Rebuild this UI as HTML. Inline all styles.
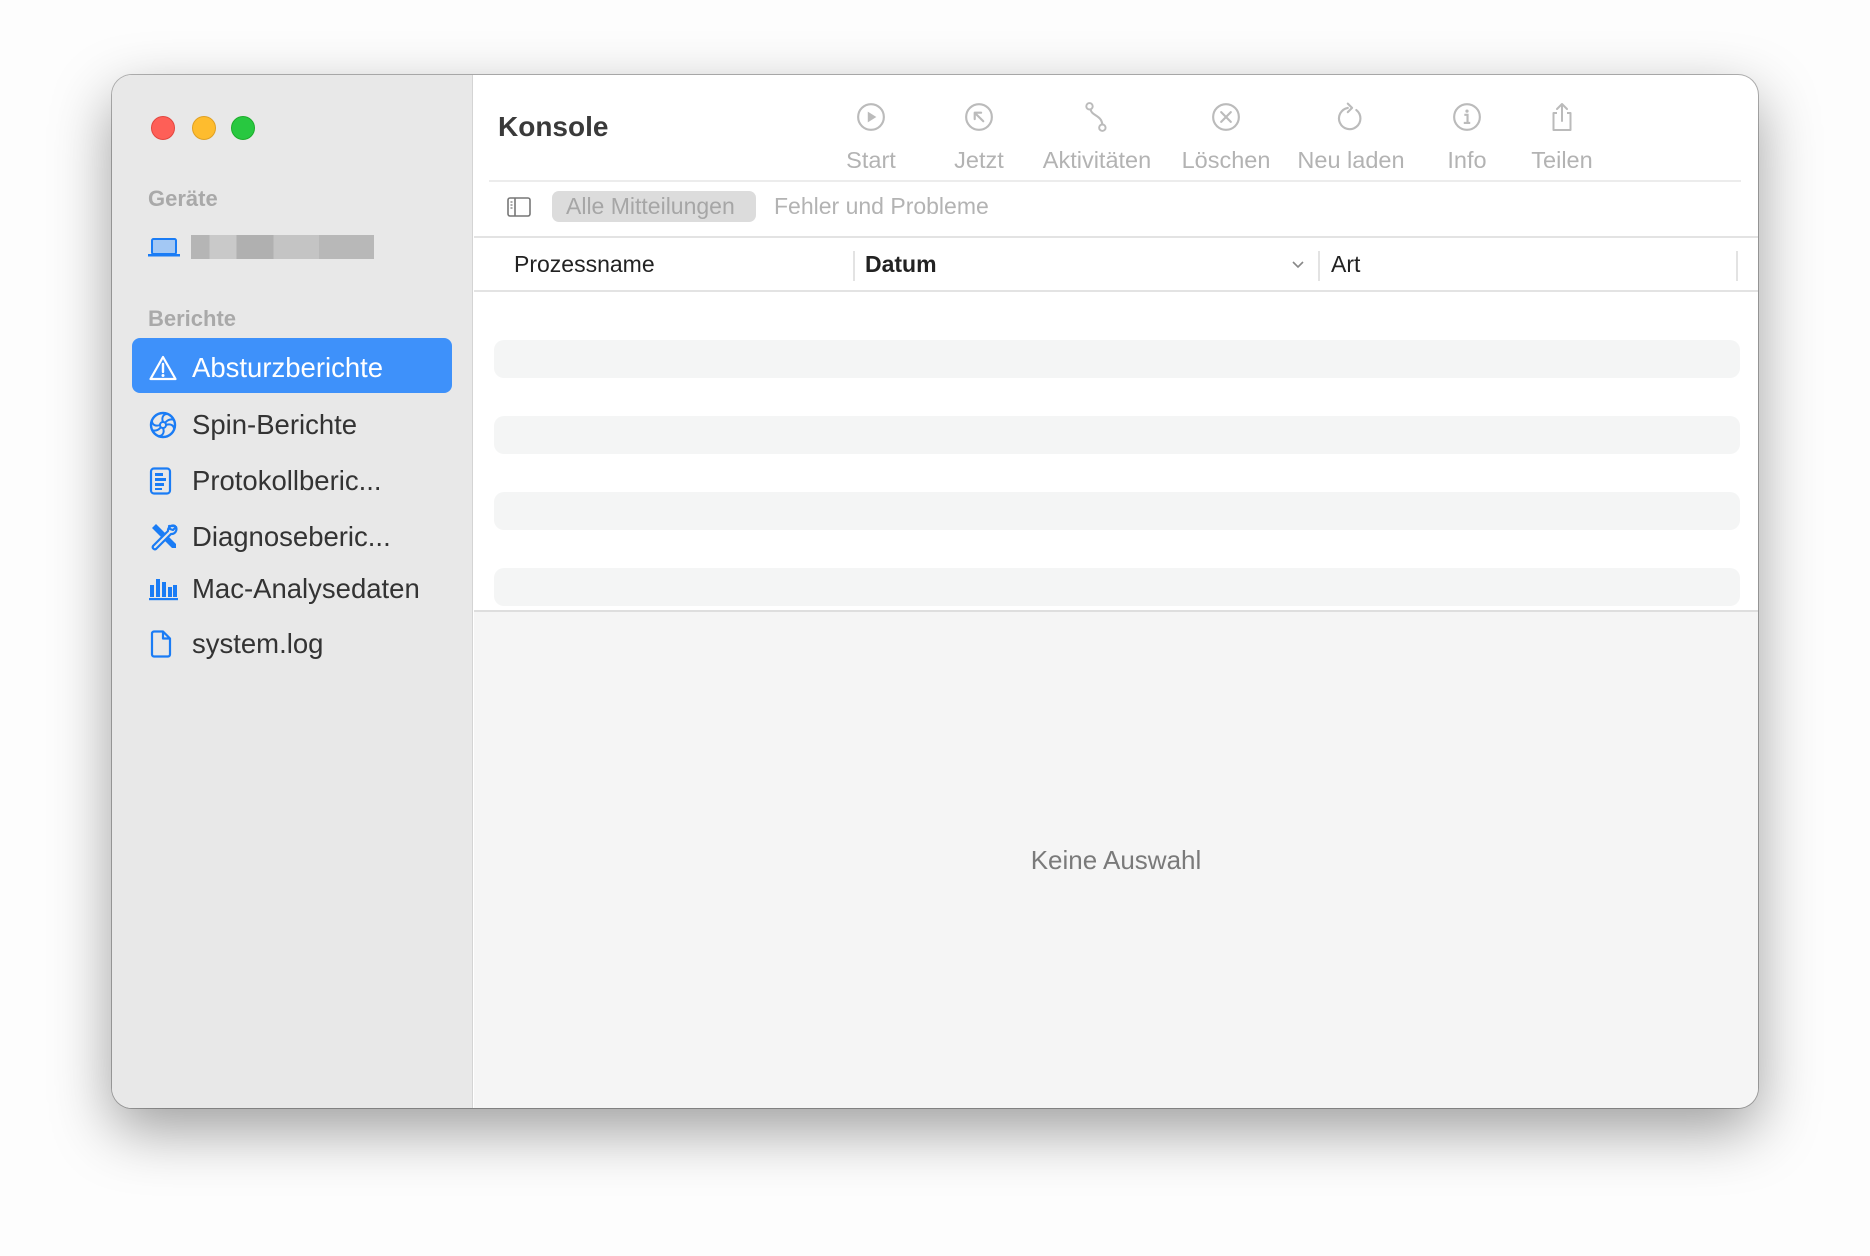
<!DOCTYPE html>
<html><head><meta charset="utf-8"><style>
*{margin:0;padding:0;box-sizing:border-box}
body{width:1870px;height:1256px;background:#fdfdfd;font-family:"Liberation Sans",sans-serif;position:relative;overflow:hidden}
.win{position:absolute;left:112px;top:75px;width:1646px;height:1033px;border-radius:20px;background:#fff;box-shadow:0 0 0 1px rgba(0,0,0,.28),0 22px 60px rgba(0,0,0,.38);overflow:hidden}
.side{position:absolute;left:0;top:0;width:361px;height:100%;background:#e8e8e8;border-right:1px solid #d4d4d4}
.dot{position:absolute;top:41px;width:24px;height:24px;border-radius:50%}
.abs{position:absolute;white-space:nowrap}
.hdr{font-size:22px;font-weight:bold;color:#a9a9a9}
.item{position:absolute;left:0;width:361px;height:56px;font-size:27.5px;color:#333}
.item .t{position:absolute;left:80px;top:50%;transform:translateY(-50%)}
.item svg{position:absolute;left:37px;top:50%;transform:translateY(-50%)}
.main{position:absolute;left:362px;top:0;right:0;height:100%}
.tb{position:absolute;top:0;width:140px;margin-left:-70px;text-align:center}
.tb svg{display:block;margin:27px auto 0}
.tb .l{font-size:23.5px;color:#b3b3b3;margin-top:15px}
.row{position:absolute;left:20px;right:18px;height:38px;background:#f4f5f5;border-radius:10px}
</style></head><body>
<div class="win">
 <div class="side">
  <div class="dot" style="left:39px;background:#fe5f57;border:1px solid #e2463f"></div>
  <div class="dot" style="left:80px;background:#febc2e;border:1px solid #dfa023"></div>
  <div class="dot" style="left:119px;background:#28c840;border:1px solid #1dad2b"></div>
  <div class="abs hdr" style="left:36px;top:111px">Geräte</div>
  <svg class="abs" style="left:36px;top:162px" width="32" height="20" viewBox="0 0 32 20"><rect x="4" y="2" width="24" height="15" rx="1.5" fill="#a3c8f4" stroke="#1a7cf5" stroke-width="2"/><rect x="0" y="17" width="32" height="2.5" fill="#1a7cf5"/></svg>
  <div class="abs" style="left:79px;top:160px;width:183px;height:24px;background:linear-gradient(90deg,#b5b5b5 0 10%,#c9c9c9 10% 25%,#b0b0b0 25% 45%,#c4c4c4 45% 70%,#b8b8b8 70% 100%)"></div>
  <div class="abs hdr" style="left:36px;top:231px">Berichte</div>
  <div class="abs" style="left:20px;top:263px;width:320px;height:55px;background:#3e91fa;border-radius:8px"></div>
  <div class="item" style="top:265px;color:#fff"><svg width="28" height="26" viewBox="0 0 28 26"><path d="M14 2 L26.5 24 H1.5 Z" fill="none" stroke="#fff" stroke-width="2.2" stroke-linejoin="round"/><path d="M14 9v8" stroke="#fff" stroke-width="2.4" stroke-linecap="round"/><circle cx="14" cy="20.5" r="1.5" fill="#fff"/></svg><span class="t" style="color:#fff">Absturzberichte</span></div>
  <div class="item" style="top:322px"><svg width="28" height="28" viewBox="0 0 28 28"><circle cx="14" cy="14" r="12" fill="none" stroke="#1a7cf5" stroke-width="2.4"/><circle cx="14" cy="14" r="3" fill="none" stroke="#1a7cf5" stroke-width="2"/><path d="M14 11 C12 6 15 3 18 3 M17 14 C22 12 25 15 25 18 M14 17 C16 22 13 25 10 25 M11 14 C6 16 3 13 3 10 M16 12 C19 8 23 8 24 9 M12 16 C9 20 5 20 4 19" fill="none" stroke="#1a7cf5" stroke-width="2"/></svg><span class="t">Spin-Berichte</span></div>
  <div class="item" style="top:378px"><svg width="24" height="28" viewBox="0 0 24 28"><rect x="2" y="1.5" width="19" height="25" rx="3" fill="none" stroke="#1a7cf5" stroke-width="2.2"/><rect x="6" y="6" width="8" height="3" fill="#1a7cf5"/><rect x="6" y="11" width="11" height="3" fill="#1a7cf5"/><rect x="6" y="16" width="9" height="3" fill="#1a7cf5"/><rect x="6" y="21" width="7" height="2" fill="#1a7cf5"/></svg><span class="t">Protokollberic...</span></div>
  <div class="item" style="top:434px"><svg width="30" height="30" viewBox="0 0 30 30"><path d="M3 6 L7 2 L27 22 L27 26 L23 26 Z" fill="#1a7cf5"/><path d="M26 4 a5 5 0 0 0 -7 5 L4 24 a2.2 2.2 0 0 0 3 3 L22 12 a5 5 0 0 0 5 -7 l-3 3 -3 -1 -1 -3 z" fill="#e8e8e8" stroke="#1a7cf5" stroke-width="2.2" stroke-linejoin="round"/></svg><span class="t">Diagnoseberic...</span></div>
  <div class="item" style="top:486px"><svg width="30" height="24" viewBox="0 0 30 24"><rect x="1" y="8" width="4" height="12" fill="#1a7cf5"/><rect x="7" y="2" width="4" height="18" fill="#1a7cf5"/><rect x="13" y="5" width="4" height="15" fill="#1a7cf5"/><rect x="19" y="10" width="4" height="10" fill="#1a7cf5"/><rect x="24" y="8" width="4" height="12" fill="#1a7cf5"/><rect x="0" y="21" width="29" height="2.2" fill="#1a7cf5"/></svg><span class="t">Mac-Analysedaten</span></div>
  <div class="item" style="top:541px"><svg width="24" height="28" viewBox="0 0 24 28"><path d="M3 3.5 a2 2 0 0 1 2-2 H14 L21 8.5 V24.5 a2 2 0 0 1 -2 2 H5 a2 2 0 0 1 -2-2 Z M14 1.5 V8.5 H21" fill="none" stroke="#1a7cf5" stroke-width="2.2" stroke-linejoin="round"/></svg><span class="t">system.log</span></div>
 </div>
 <div class="main">
  <div class="abs" style="left:24px;top:36px;font-size:28px;font-weight:bold;color:#3a3a3a">Konsole</div>
  <div class="tb" style="left:397px"><svg width="30" height="30" viewBox="0 0 28 28"><circle cx="14" cy="14" r="12" fill="none" stroke="#bbb" stroke-width="2"/><path d="M11 9 L19 14 L11 19Z" fill="#bbb"/></svg><div class="l">Start</div></div>
  <div class="tb" style="left:505px"><svg width="30" height="30" viewBox="0 0 28 28"><circle cx="14" cy="14" r="12" fill="none" stroke="#bbb" stroke-width="2"/><path d="M18 18 L10 10 M10 10 V16 M10 10 H16" fill="none" stroke="#bbb" stroke-width="2" stroke-linecap="round"/></svg><div class="l">Jetzt</div></div>
  <div class="tb" style="left:623px"><svg width="30" height="30" viewBox="0 0 28 28"><circle cx="7" cy="4" r="3" fill="none" stroke="#bbb" stroke-width="1.8"/><circle cx="19" cy="24" r="3" fill="none" stroke="#bbb" stroke-width="1.8"/><path d="M8 7 C9 13 18 12 19 21" fill="none" stroke="#bbb" stroke-width="2"/></svg><div class="l">Aktivitäten</div></div>
  <div class="tb" style="left:752px"><svg width="30" height="30" viewBox="0 0 28 28"><circle cx="14" cy="14" r="12" fill="none" stroke="#bbb" stroke-width="2"/><path d="M9.5 9.5 L18.5 18.5 M18.5 9.5 L9.5 18.5" stroke="#bbb" stroke-width="2" stroke-linecap="round"/></svg><div class="l">Löschen</div></div>
  <div class="tb" style="left:877px"><svg width="30" height="30" viewBox="0 0 28 28"><path d="M19 7.5 A10 10 0 1 1 11 5.5" fill="none" stroke="#bbb" stroke-width="2" stroke-linecap="round"/><path d="M11 1.5 L15 5.5 L11 9.5" fill="none" stroke="#bbb" stroke-width="2" stroke-linecap="round" stroke-linejoin="round"/></svg><div class="l">Neu laden</div></div>
  <div class="tb" style="left:993px"><svg width="30" height="30" viewBox="0 0 28 28"><circle cx="14" cy="14" r="12" fill="none" stroke="#bbb" stroke-width="2"/><circle cx="14" cy="8.5" r="1.5" fill="#bbb"/><path d="M11.5 12 H14.5 V19 M11 19.5 H17" fill="none" stroke="#bbb" stroke-width="2"/></svg><div class="l">Info</div></div>
  <div class="tb" style="left:1088px"><svg width="30" height="30" viewBox="0 0 28 30"><path d="M9 11 H5.5 V28 H22.5 V11 H19" fill="none" stroke="#bbb" stroke-width="2" stroke-linejoin="round"/><path d="M14 19 V2 M9 7 L14 2 L19 7" fill="none" stroke="#bbb" stroke-width="2" stroke-linecap="round" stroke-linejoin="round"/></svg><div class="l">Teilen</div></div>
  <div class="abs" style="left:15px;right:17px;top:105px;height:2px;background:#ececec"></div>
  <svg class="abs" style="left:33px;top:122px" width="24" height="20" viewBox="0 0 24 20"><rect x="1" y="1" width="22" height="18" rx="2" fill="none" stroke="#777" stroke-width="1.6"/><path d="M8 1 V19" stroke="#777" stroke-width="1.6"/><path d="M3.5 5h2M3.5 8h2M3.5 11h2" stroke="#777" stroke-width="1.2"/></svg>
  <div class="abs" style="left:78px;top:116px;width:204px;height:31px;border-radius:7px;background:#dcdcdc"></div>
  <div class="abs" style="left:92px;top:118px;font-size:23px;color:#a6a6a6">Alle Mitteilungen</div>
  <div class="abs" style="left:300px;top:118px;font-size:23px;color:#b3b3b3">Fehler und Probleme</div>
  <div class="abs" style="left:0;right:0;top:161px;height:2px;background:#e3e3e3"></div>
  <div class="abs" style="left:40px;top:176px;font-size:23px;color:#222">Prozessname</div>
  <div class="abs" style="left:379px;top:176px;width:2px;height:30px;background:#e3e3e3"></div>
  <div class="abs" style="left:391px;top:176px;font-size:23px;color:#222;font-weight:bold">Datum</div>
  <svg class="abs" style="left:817px;top:185px" width="14" height="10" viewBox="0 0 14 10"><path d="M2 2 L7 7 L12 2" fill="none" stroke="#888" stroke-width="1.6"/></svg>
  <div class="abs" style="left:844px;top:176px;width:2px;height:30px;background:#e3e3e3"></div>
  <div class="abs" style="left:857px;top:176px;font-size:23px;color:#222">Art</div>
  <div class="abs" style="left:1262px;top:176px;width:2px;height:30px;background:#e3e3e3"></div>
  <div class="abs" style="left:0;right:0;top:215px;height:2px;background:#e3e3e3"></div>
  <div class="row" style="top:265px"></div>
  <div class="row" style="top:341px"></div>
  <div class="row" style="top:417px"></div>
  <div class="row" style="top:493px"></div>
  <div class="abs" style="left:0;right:0;top:535px;bottom:0;background:#f5f5f5;border-top:2px solid #dedede"></div>
  <div class="abs" style="left:0;right:0;top:770px;text-align:center;font-size:26px;color:#7a7a7a">Keine Auswahl</div>
 </div>
</div>
</body></html>
